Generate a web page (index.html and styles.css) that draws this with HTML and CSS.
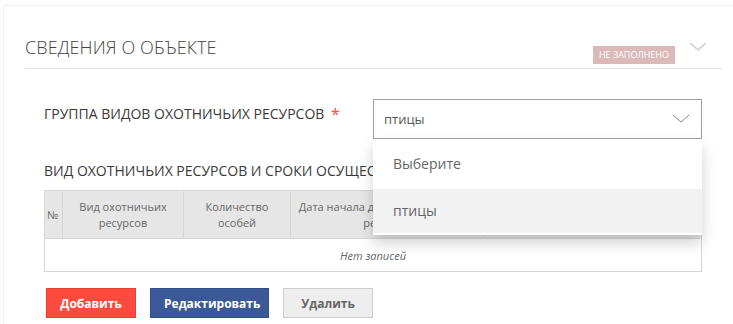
FILE: index.html
```html
<!DOCTYPE html>
<html lang="ru">
<head>
  <meta charset="UTF-8" />
  <meta name="viewport" content="width=device-width, initial-scale=1" />
  <title>Сведения о объекте</title>
  <link rel="stylesheet" href="styles.css">
</head>
<body>
  <div class="card">
    <!-- Section header -->
    <div class="card-header">
      <h2 class="card-title">СВЕДЕНИЯ О ОБЪЕКТЕ</h2>
      <span class="badge">НЕ ЗАПОЛНЕНО</span>
      <svg class="collapse-icon" width="18" height="10" viewBox="0 0 18 10">
        <polyline points="1,1 9,8 17,1" fill="none" stroke="#c8c8c8" stroke-width="1.2" />
      </svg>
    </div>

    <div class="card-body">
      <div class="form-row">
        <label class="field-label">ГРУППА ВИДОВ ОХОТНИЧЬИХ РЕСУРСОВ <span class="required">*</span></label>
        <div class="select">
          <div class="select-value">
            птицы
            <svg class="select-arrow" width="18" height="10" viewBox="0 0 18 10">
              <polyline points="1,1 9,8 17,1" fill="none" stroke="#888" stroke-width="1" />
            </svg>
          </div>
          <!-- Open dropdown list -->
          <ul class="select-menu">
            <li class="select-option">Выберите</li>
            <li class="select-option active">птицы</li>
          </ul>
        </div>
      </div>

      <div class="field-label section-label">ВИД ОХОТНИЧЬИХ РЕСУРСОВ И СРОКИ ОСУЩЕСТВЛЕНИЯ ДОБЫЧИ</div>

      <table class="grid">
        <colgroup>
          <col style="width:18px">
          <col style="width:121px">
          <col style="width:107px">
          <col style="width:194px">
          <col>
        </colgroup>
        <thead>
          <tr>
            <th>№</th>
            <th>Вид охотничьих ресурсов</th>
            <th>Количество особей</th>
            <th>Дата начала добычи охотничьих ресурсов</th>
            <th>Дата окончания добычи охотничьих ресурсов</th>
          </tr>
        </thead>
        <tbody>
          <tr>
            <td colspan="5" class="empty">Нет записей</td>
          </tr>
        </tbody>
      </table>

      <div class="actions">
        <button class="btn btn-add">Добавить</button>
        <button class="btn btn-edit">Редактировать</button>
        <button class="btn btn-delete">Удалить</button>
      </div>
    </div>
  </div>
</body>
</html>
```

FILE: styles.css
```css
/* Global Styles */
body {
  font-family: 'Open Sans', 'Liberation Sans', sans-serif;
  background: #fff;
  margin: 0;
  padding: 0;
  color: #333;
}
/* Outer card with faint border */
.card {
  margin: 5px 0 0 3px;
  border-top: 1px solid #f0f0f0;
  border-left: 1px solid #f0f0f0;
  padding: 0 11px 0 21px;
}
.card-header {
  display: flex;
  align-items: flex-end;
  height: 62px;
  border-bottom: 1px solid #e4e4e4;
}
.card-title {
  flex: 1;
  margin: 0 0 9px 0;
  font-size: 18px;
  font-weight: 300;
  color: #444;
  letter-spacing: 0.1px;
}
.badge {
  background: #dbb9b8;
  color: #fff;
  font-size: 9px;
  line-height: 18px;
  padding: 0 6px;
  margin-bottom: 4px;
}
.collapse-icon {
  align-self: flex-start;
  margin: 36px 15px 0 14px;
}
.card-body {
  padding: 30px 20px 10px 19px;
}
.form-row {
  display: flex;
  align-items: flex-start;
}
.field-label {
  font-size: 14px;
  font-weight: 400;
  color: #3a3a3a;
  line-height: 20px;
}
.form-row .field-label {
  width: 329px;
  flex-shrink: 0;
  padding-top: 5px;
}
.required {
  color: #ff4a3e;
  font-size: 16px;
  vertical-align: top;
  margin-left: 3px;
}
.select {
  position: relative;
  flex: 1;
}
.select-value {
  display: flex;
  align-items: center;
  justify-content: space-between;
  height: 38px;
  border: 1px solid #a0a0a0;
  padding: 0 11px 0 10px;
  font-size: 13px;
  color: #555;
}
/* Dropdown list that lies over the content below */
.select-menu {
  position: absolute;
  top: 40px;
  left: 0;
  right: 0;
  margin: 0;
  padding: 0 0 2px 0;
  list-style: none;
  background: #fff;
  box-shadow: 0 8px 14px rgba(0, 0, 0, 0.18);
  z-index: 2;
}
.select-option {
  padding: 0 20px;
  font-size: 14px;
  color: #666;
  line-height: 48px;
}
.select-option:first-child {
  line-height: 50px;
}
.select-option.active {
  background: #f2f2f2;
  line-height: 44px;
}
.section-label {
  margin-top: 22px;
  white-space: nowrap;
  overflow: hidden;
}
/* Data table */
.grid {
  width: 100%;
  margin-top: 9px;
  border-collapse: collapse;
  table-layout: fixed;
  border: 1px solid #d6d6d6;
}
.grid th {
  background: #e6e6e6;
  border-right: 1px solid #d6d6d6;
  font-size: 11px;
  font-weight: 400;
  color: #666;
  line-height: 16px;
  height: 47px;
  padding: 0 4px;
  overflow: hidden;
  white-space: normal;
}
.grid th:first-child {
  padding: 0 2px;
  text-align: left;
}
.grid td.empty {
  height: 32px;
  padding: 0;
  text-align: center;
  font-size: 11px;
  font-style: italic;
  color: #666;
  border-top: 1px solid #d6d6d6;
}
.actions {
  display: flex;
  gap: 14px;
  margin-top: 16px;
  padding-left: 2px;
}
.btn {
  font-family: 'Open Sans', 'Liberation Sans', sans-serif;
  font-size: 12px;
  font-weight: 700;
  height: 30px;
  padding: 0 13px;
  cursor: pointer;
}
.btn-add {
  width: 90px;
  background: #ff4a3e;
  border: 1px solid #e84035;
  color: #fff;
}
.btn-edit {
  width: 119px;
  background: #3b5897;
  border: 1px solid #34508a;
  color: #fff;
}
.btn-delete {
  width: 90px;
  background: #eee;
  border: 1px solid #ccc;
  color: #666;
}
```
